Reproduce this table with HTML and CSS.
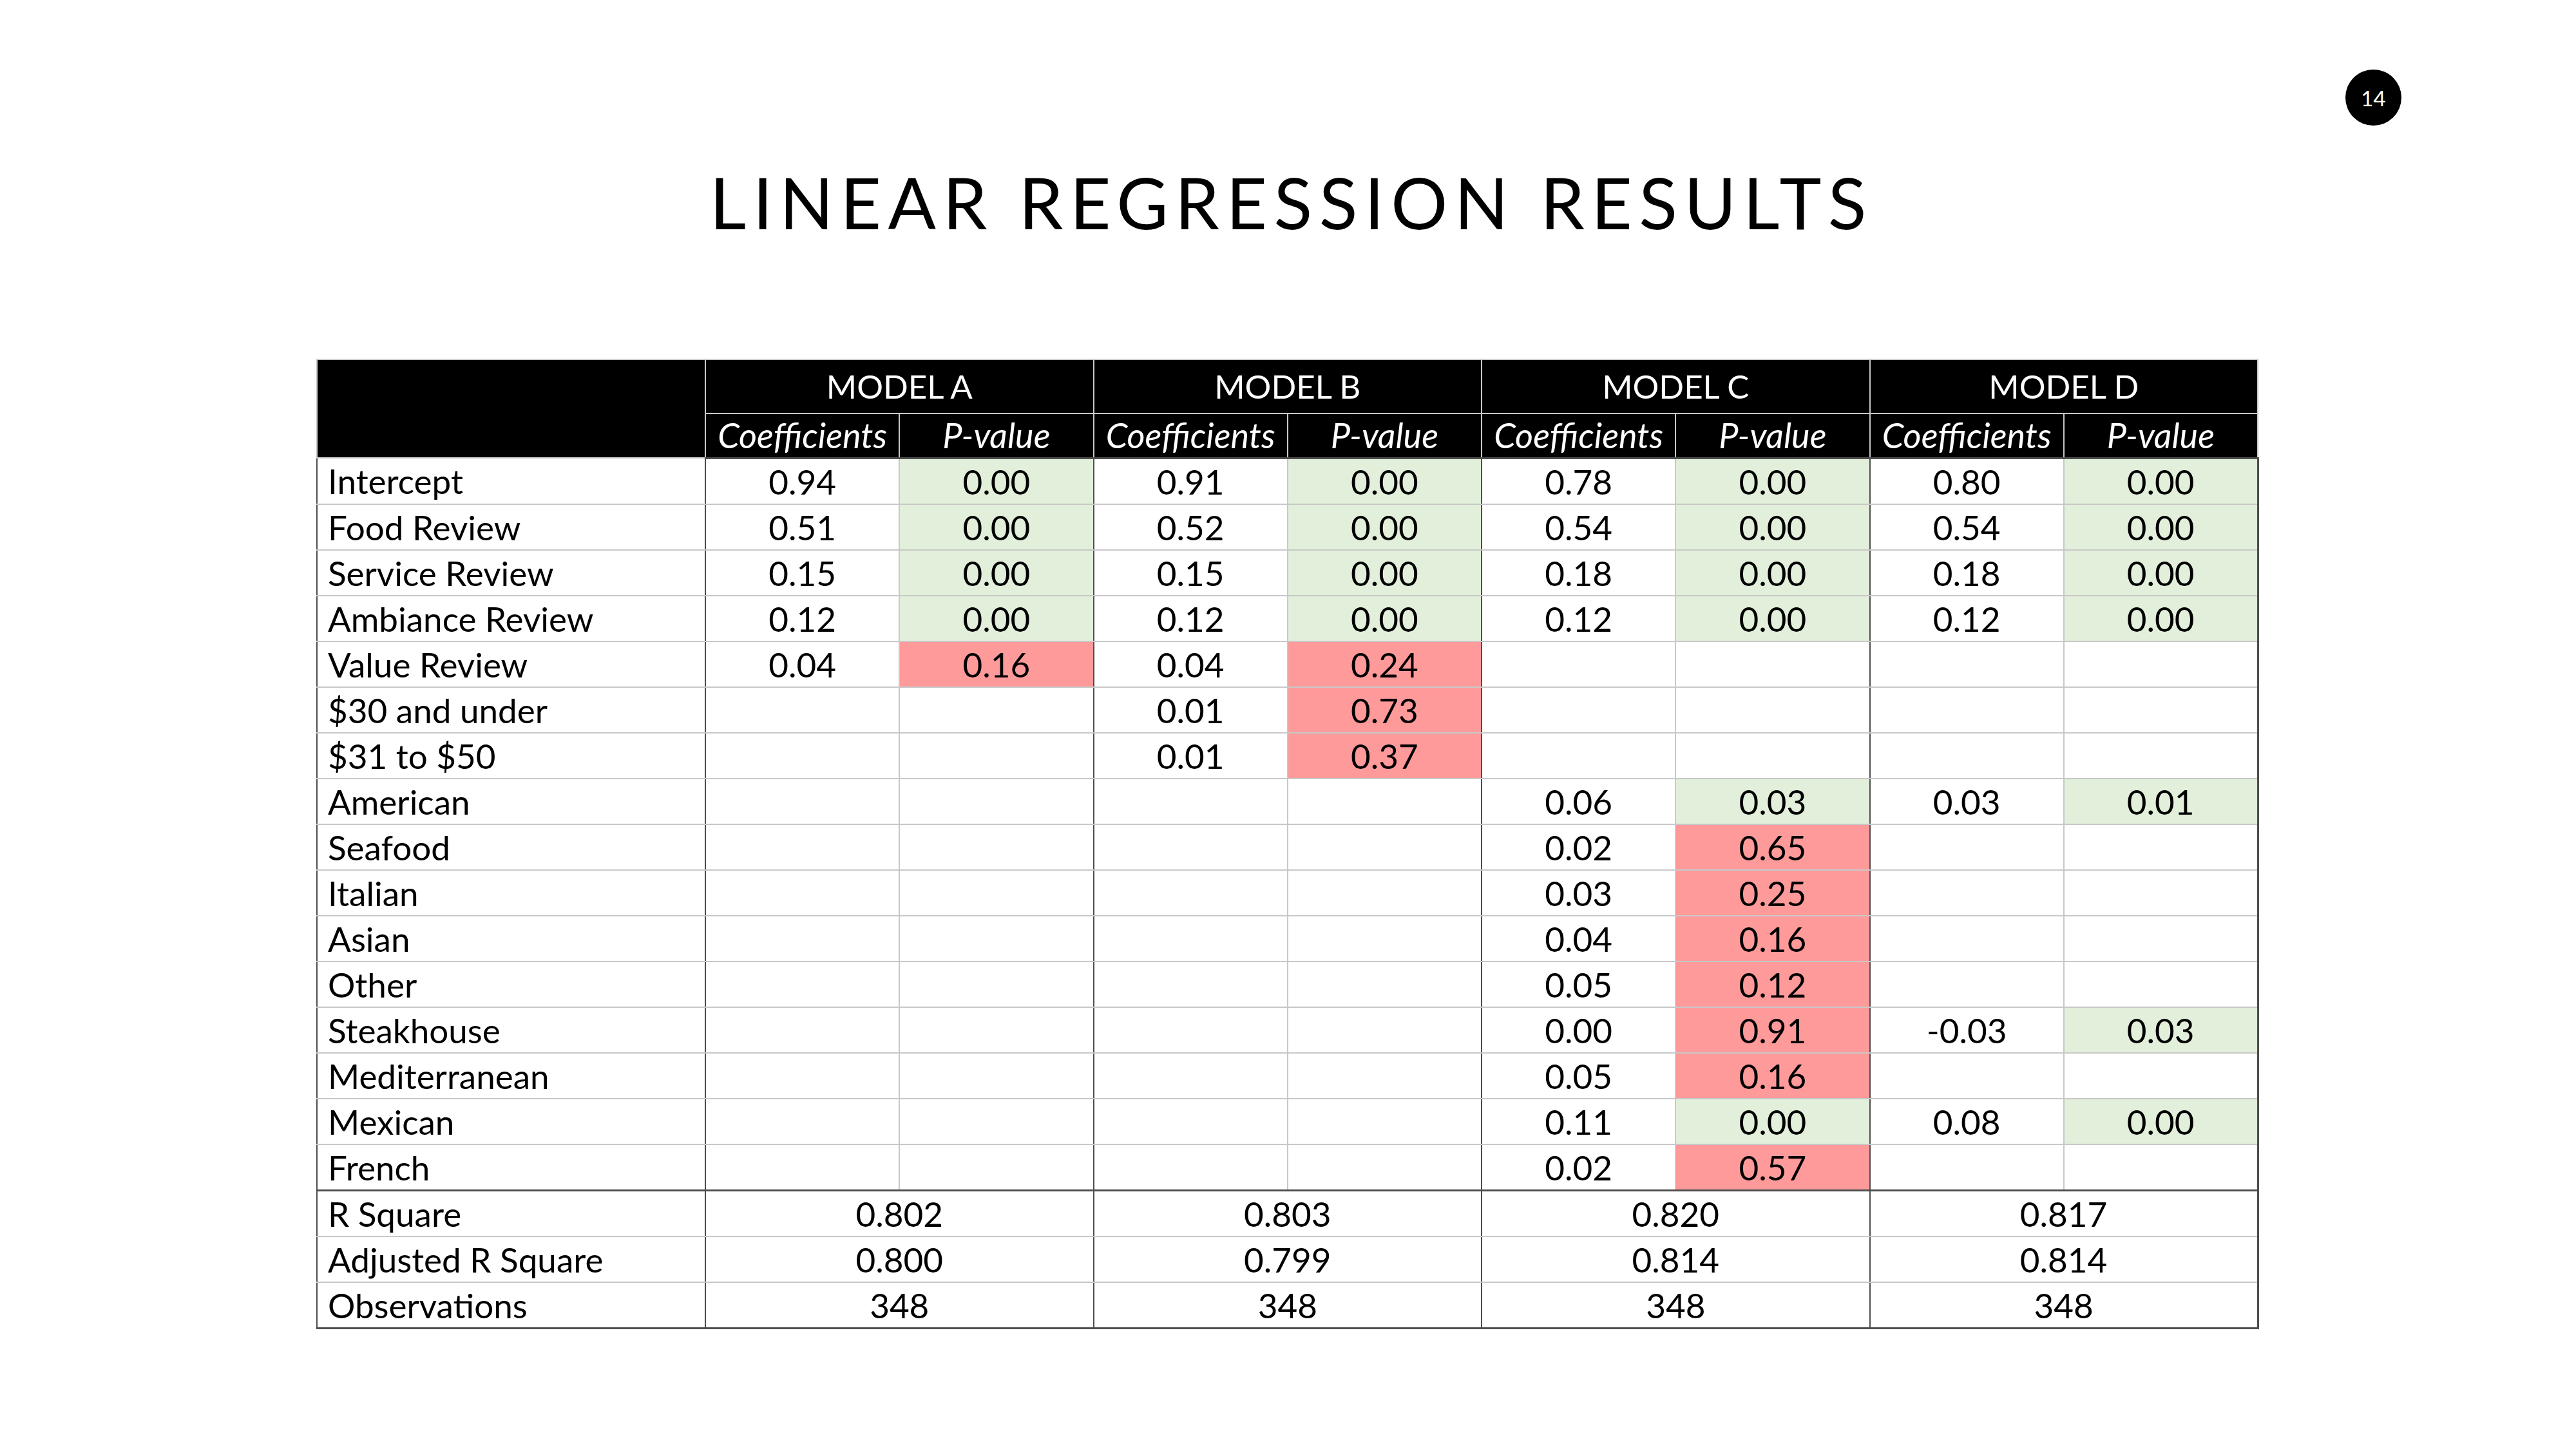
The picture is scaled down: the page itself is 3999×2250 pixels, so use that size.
FILE: index.html
```html
<!DOCTYPE html>
<html lang="en">
<head>
<meta charset="utf-8">
<title>Linear Regression Results</title>
<link rel="stylesheet" href="styles.css">
</head>
<body>
<div class="slide">
  <div class="page-num">14</div>
  <h1 class="title">LINEAR REGRESSION RESULTS</h1>
  <table class="results">
    <colgroup>
      <col class="col-label">
      <col class="col-sub"><col class="col-sub">
      <col class="col-sub"><col class="col-sub">
      <col class="col-sub"><col class="col-sub">
      <col class="col-sub"><col class="col-sub">
    </colgroup>
    <thead>
      <tr class="h-model">
        <th rowspan="2" class="h-blank"></th>
        <th colspan="2">MODEL A</th>
        <th colspan="2">MODEL B</th>
        <th colspan="2">MODEL C</th>
        <th colspan="2">MODEL D</th>
      </tr>
      <tr class="h-sub">
        <th>Coefficients</th><th>P-value</th>
        <th>Coefficients</th><th>P-value</th>
        <th>Coefficients</th><th>P-value</th>
        <th>Coefficients</th><th>P-value</th>
      </tr>
    </thead>
    <tbody>
      <tr><td class="lbl">Intercept</td><td class="c">0.94</td><td class="p sig">0.00</td><td class="c">0.91</td><td class="p sig">0.00</td><td class="c">0.78</td><td class="p sig">0.00</td><td class="c">0.80</td><td class="p sig">0.00</td></tr>
      <tr><td class="lbl">Food Review</td><td class="c">0.51</td><td class="p sig">0.00</td><td class="c">0.52</td><td class="p sig">0.00</td><td class="c">0.54</td><td class="p sig">0.00</td><td class="c">0.54</td><td class="p sig">0.00</td></tr>
      <tr><td class="lbl">Service Review</td><td class="c">0.15</td><td class="p sig">0.00</td><td class="c">0.15</td><td class="p sig">0.00</td><td class="c">0.18</td><td class="p sig">0.00</td><td class="c">0.18</td><td class="p sig">0.00</td></tr>
      <tr><td class="lbl">Ambiance Review</td><td class="c">0.12</td><td class="p sig">0.00</td><td class="c">0.12</td><td class="p sig">0.00</td><td class="c">0.12</td><td class="p sig">0.00</td><td class="c">0.12</td><td class="p sig">0.00</td></tr>
      <tr><td class="lbl">Value Review</td><td class="c">0.04</td><td class="p ns">0.16</td><td class="c">0.04</td><td class="p ns">0.24</td><td class="c"></td><td class="p"></td><td class="c"></td><td class="p"></td></tr>
      <tr><td class="lbl">$30 and under</td><td class="c"></td><td class="p"></td><td class="c">0.01</td><td class="p ns">0.73</td><td class="c"></td><td class="p"></td><td class="c"></td><td class="p"></td></tr>
      <tr><td class="lbl">$31 to $50</td><td class="c"></td><td class="p"></td><td class="c">0.01</td><td class="p ns">0.37</td><td class="c"></td><td class="p"></td><td class="c"></td><td class="p"></td></tr>
      <tr><td class="lbl">American</td><td class="c"></td><td class="p"></td><td class="c"></td><td class="p"></td><td class="c">0.06</td><td class="p sig">0.03</td><td class="c">0.03</td><td class="p sig">0.01</td></tr>
      <tr><td class="lbl">Seafood</td><td class="c"></td><td class="p"></td><td class="c"></td><td class="p"></td><td class="c">0.02</td><td class="p ns">0.65</td><td class="c"></td><td class="p"></td></tr>
      <tr><td class="lbl">Italian</td><td class="c"></td><td class="p"></td><td class="c"></td><td class="p"></td><td class="c">0.03</td><td class="p ns">0.25</td><td class="c"></td><td class="p"></td></tr>
      <tr><td class="lbl">Asian</td><td class="c"></td><td class="p"></td><td class="c"></td><td class="p"></td><td class="c">0.04</td><td class="p ns">0.16</td><td class="c"></td><td class="p"></td></tr>
      <tr><td class="lbl">Other</td><td class="c"></td><td class="p"></td><td class="c"></td><td class="p"></td><td class="c">0.05</td><td class="p ns">0.12</td><td class="c"></td><td class="p"></td></tr>
      <tr><td class="lbl">Steakhouse</td><td class="c"></td><td class="p"></td><td class="c"></td><td class="p"></td><td class="c">0.00</td><td class="p ns">0.91</td><td class="c">-0.03</td><td class="p sig">0.03</td></tr>
      <tr><td class="lbl">Mediterranean</td><td class="c"></td><td class="p"></td><td class="c"></td><td class="p"></td><td class="c">0.05</td><td class="p ns">0.16</td><td class="c"></td><td class="p"></td></tr>
      <tr><td class="lbl">Mexican</td><td class="c"></td><td class="p"></td><td class="c"></td><td class="p"></td><td class="c">0.11</td><td class="p sig">0.00</td><td class="c">0.08</td><td class="p sig">0.00</td></tr>
      <tr><td class="lbl">French</td><td class="c"></td><td class="p"></td><td class="c"></td><td class="p"></td><td class="c">0.02</td><td class="p ns">0.57</td><td class="c"></td><td class="p"></td></tr>
    </tbody>
    <tbody class="summary">
      <tr><td class="lbl">R Square</td><td colspan="2" class="m">0.802</td><td colspan="2" class="m">0.803</td><td colspan="2" class="m">0.820</td><td colspan="2" class="m">0.817</td></tr>
      <tr><td class="lbl">Adjusted R Square</td><td colspan="2" class="m">0.800</td><td colspan="2" class="m">0.799</td><td colspan="2" class="m">0.814</td><td colspan="2" class="m">0.814</td></tr>
      <tr><td class="lbl">Observations</td><td colspan="2" class="m">348</td><td colspan="2" class="m">348</td><td colspan="2" class="m">348</td><td colspan="2" class="m">348</td></tr>
    </tbody>
  </table>
</div>
</body>
</html>
```

FILE: styles.css
```css
html, body {
  margin: 0;
  padding: 0;
  background: #ffffff;
}

.slide {
  position: relative;
  width: 3999px;
  height: 2250px;
  overflow: hidden;
  font-family: "Lato", "Open Sans", sans-serif;
  color: #000000;
}

.page-num {
  position: absolute;
  left: 3641px;
  top: 108px;
  width: 87px;
  height: 87px;
  border-radius: 50%;
  background: #000000;
  color: #ffffff;
  font-size: 33px;
  display: flex;
  align-items: center;
  justify-content: center;
}

.title {
  margin: 0;
  padding-top: 250px;
  text-align: center;
  font-weight: 400;
  font-size: 110px;
  line-height: 1.15;
  letter-spacing: 10.5px;
  text-indent: 10.5px;
}

.results {
  margin: 180px 0 0 491px;
  width: 3013px;
  border-collapse: collapse;
  table-layout: fixed;
  font-size: 53px;
}

.col-label { width: 603px; }
.col-sub { width: 301.25px; }

.results th {
  background: #000000;
  color: #ffffff;
  font-weight: 400;
  border: 2px solid #c8c8c8;
  padding: 0;
  text-align: center;
  line-height: 1;
}

.h-model th { height: 82px; font-size: 51px; }
.h-sub th { height: 67px; font-style: italic; font-size: 54px; }
.h-sub th { border-bottom: 3px solid #4d4d4d; }

.results td {
  height: 69px;
  padding: 0;
  line-height: 1;
  text-align: center;
  border-top: 2px solid #c8c8c8;
  border-bottom: 2px solid #c8c8c8;
}

.results td.lbl {
  text-align: left;
  padding-left: 16px;
  border-left: 2px solid #4d4d4d;
  border-right: 2px solid #4d4d4d;
}

.results td.c {
  border-left: 2px solid #4d4d4d;
  border-right: 2px solid #c8c8c8;
}

.results td.p {
  border-left: 2px solid #c8c8c8;
  border-right: 2px solid #4d4d4d;
}

.results td.m {
  border-left: 2px solid #4d4d4d;
  border-right: 2px solid #4d4d4d;
}

.results tr > td:last-child {
  border-right: 3px solid #4d4d4d;
}

.results td.sig { background: #e2efda; }
.results td.ns { background: #ff9a9a; }

.summary tr:first-child td {
  border-top: 3px solid #4d4d4d;
}

.summary tr:last-child td {
  border-bottom: 3px solid #4d4d4d;
}
```
